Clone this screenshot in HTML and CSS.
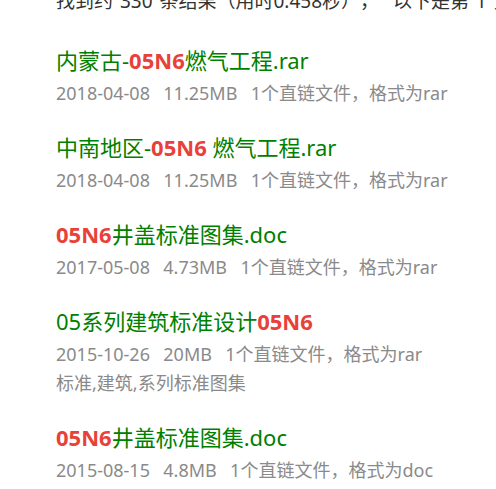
FILE: index.html
```html
<!DOCTYPE html>
<html lang="zh-CN">
<head>
<meta charset="utf-8">
<title>搜索结果</title>
<link rel="stylesheet" href="styles.css">
</head>
<body>
<div class="page">
  <div class="summary">找到约 330 条结果（用时0.458秒）， &nbsp;以下是第 1 页</div>
  <ul class="results">
    <li class="item">
      <div class="title">内蒙古-<em>05N6</em>燃气工程.rar</div>
      <div class="meta">2018-04-08&nbsp;&nbsp;11.25MB&nbsp;&nbsp;1个直链文件，格式为rar</div>
    </li>
    <li class="item">
      <div class="title">中南地区-<em>05N6</em> 燃气工程.rar</div>
      <div class="meta">2018-04-08&nbsp;&nbsp;11.25MB&nbsp;&nbsp;1个直链文件，格式为rar</div>
    </li>
    <li class="item">
      <div class="title"><em>05N6</em>井盖标准图集.doc</div>
      <div class="meta">2017-05-08&nbsp;&nbsp;4.73MB&nbsp;&nbsp;1个直链文件，格式为rar</div>
    </li>
    <li class="item">
      <div class="title">05系列建筑标准设计<em>05N6</em></div>
      <div class="meta">2015-10-26&nbsp;&nbsp;20MB&nbsp;&nbsp;1个直链文件，格式为rar</div>
      <div class="meta">标准,建筑,系列标准图集</div>
    </li>
    <li class="item">
      <div class="title"><em>05N6</em>井盖标准图集.doc</div>
      <div class="meta">2015-08-15&nbsp;&nbsp;4.8MB&nbsp;&nbsp;1个直链文件，格式为doc</div>
    </li>
  </ul>
</div>
</body>
</html>
```

FILE: styles.css
```css
html, body {
  margin: 0;
  padding: 0;
  background: #fff;
  overflow: hidden;
}
body {
  font-family: "Noto Sans", "Noto Sans CJK SC", sans-serif;
  width: 496px;
  height: 489px;
}
.page {
  padding-left: 56px;
}
.summary {
  margin-top: -14px;
  font-size: 19px;
  line-height: 30px;
  color: #333;
  white-space: nowrap;
  word-spacing: 2px;
  text-spacing-trim: space-all;
}
.results {
  list-style: none;
  margin: 29px 0 0;
  padding: 0;
}
.item {
  margin-bottom: 24px;
}
.title {
  font-size: 22px;
  line-height: 30px;
  color: #008000;
  white-space: nowrap;
  margin-bottom: 4px;
}
.title em {
  font-style: normal;
  font-weight: bold;
  color: #e8413a;
}
.meta {
  font-size: 18px;
  line-height: 29px;
  color: #8a8a8a;
  white-space: nowrap;
  word-spacing: 2px;
}
```
